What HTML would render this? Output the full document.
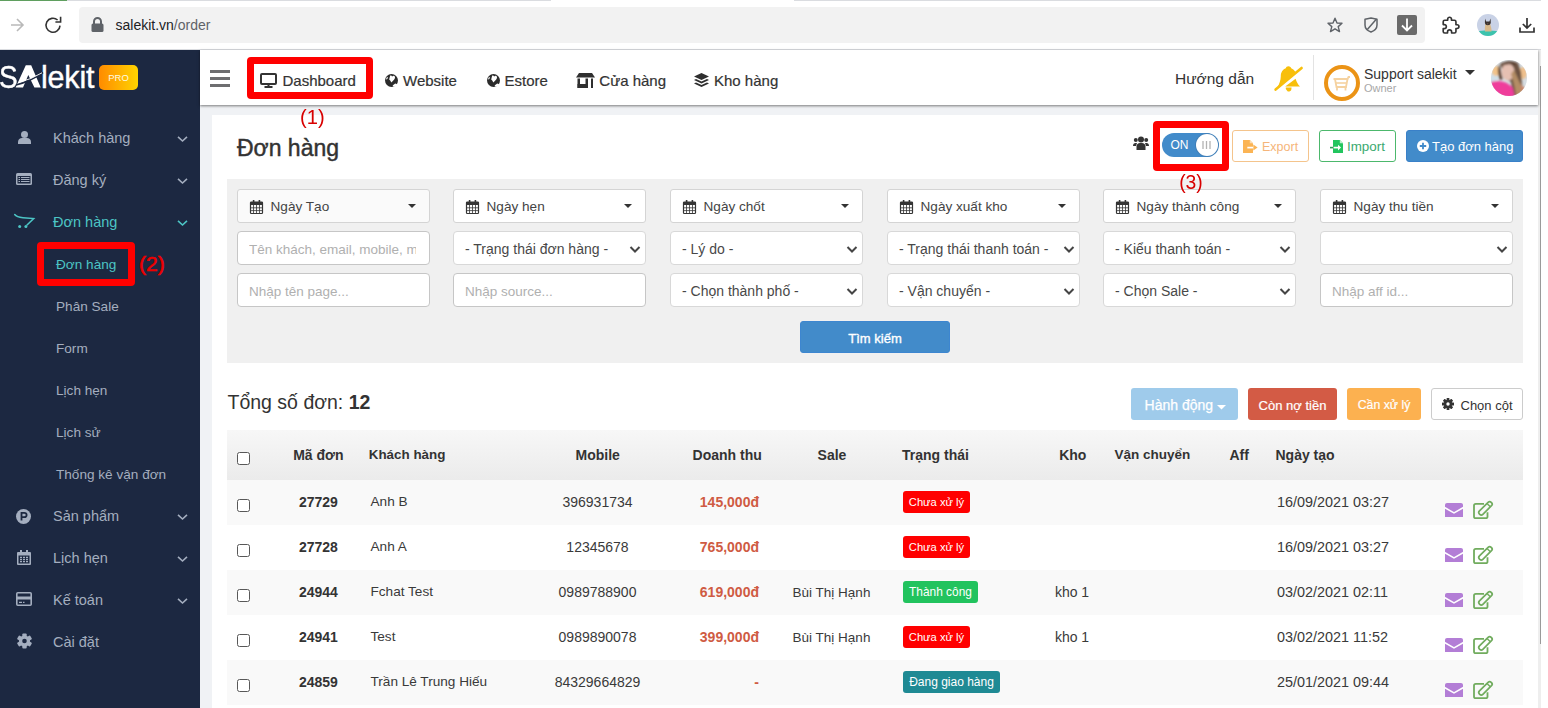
<!DOCTYPE html>
<html><head><meta charset="utf-8">
<style>
*{box-sizing:border-box;margin:0;padding:0}
html,body{width:1548px;height:708px;overflow:hidden;background:#fff;font-family:"Liberation Sans",sans-serif;color:#333}
.a{position:absolute;white-space:nowrap;line-height:1}
svg{position:absolute;display:block;overflow:visible}
</style></head><body>

<div style="position:absolute;left:0px;top:0px;width:1548px;height:50px;background:#fff"></div>
<div style="position:absolute;left:0px;top:0px;width:551px;height:1px;background:#dadce0"></div>
<div style="position:absolute;left:794px;top:0px;width:747px;height:1px;background:#dadce0"></div>
<div style="position:absolute;left:0px;top:0px;width:67px;height:1px;background:#5f9f5f"></div>
<div style="position:absolute;left:0px;top:49px;width:1541px;height:1px;background:#dadce0"></div>
<div style="position:absolute;left:79px;top:7px;width:1346px;height:36px;background:#f2f2f2;border-radius:4px"></div>
<svg style="left:10px;top:18px" width="14" height="14" viewBox="0 0 14 14"><path d="M1 7H13M7 1L13 7L7 13" fill="none" stroke="#b9b9b9" stroke-width="1.6"/></svg>
<svg style="left:45px;top:16px" width="17" height="17" viewBox="0 0 17 17"><path d="M15 9.6A7 7 0 1 1 12.6 4" fill="none" stroke="#333" stroke-width="1.6"/><path d="M15.6 0.8V6H10.4" fill="none" stroke="#333" stroke-width="1.6"/></svg>
<svg style="left:91px;top:17px" width="13" height="15" viewBox="0 0 13 15"><path d="M3 7V4.5A3.5 3.5 0 0 1 10 4.5V7" fill="none" stroke="#5f6368" stroke-width="2"/><rect x="0.5" y="6.5" width="12" height="8.5" rx="1.5" fill="#5f6368"/></svg>
<span class="a" style="left:115.50px;top:18.15px;font-size:14px;color:#202124;font-weight:normal;">salekit.vn<span style="color:#5f6368">/order</span></span>
<svg style="left:1327px;top:17px" width="16" height="16" viewBox="0 0 16 16"><path d="M8 1.2L10 6L15 6.3L11.2 9.6L12.5 14.6L8 11.8L3.5 14.6L4.8 9.6L1 6.3L6 6Z" fill="none" stroke="#5f6368" stroke-width="1.4" stroke-linejoin="round"/></svg>
<svg style="left:1364px;top:17px" width="14" height="16" viewBox="0 0 14 16"><path d="M7 1L1 2.2V8C1 11.5 3.6 13.8 7 15C10.4 13.8 13 11.5 13 8V2.2Z" fill="none" stroke="#5f6368" stroke-width="1.5" stroke-linejoin="round"/><path d="M3.3 12.5L12.5 2" stroke="#5f6368" stroke-width="1.5"/></svg>
<div style="position:absolute;left:1397px;top:15px;width:20px;height:20px;background:#6a6a6a;border-radius:2px"></div>
<svg style="left:1397px;top:15px" width="20" height="20" viewBox="0 0 20 20"><path d="M10 3.5V15.5M5 10.5L10 15.5L15 10.5" fill="none" stroke="#fff" stroke-width="1.8"/></svg>
<svg style="left:1443px;top:17px" width="16" height="16" viewBox="0 0 16 16"><g transform="translate(-1.3 -0.55) scale(0.75)"><path d="M20.5 11H19V7c0-1.1-.9-2-2-2h-4V3.5C13 2.12 11.88 1 10.5 1S8 2.12 8 3.5V5H4c-1.1 0-2 .9-2 2v3.8h1.5c1.49 0 2.7 1.21 2.7 2.7S4.99 16.2 3.5 16.2H2V20c0 1.1.9 2 2 2h3.8v-1.5c0-1.49 1.21-2.7 2.7-2.7s2.7 1.21 2.7 2.7V22H17c1.1 0 2-.9 2-2v-4h1.5c1.38 0 2.5-1.12 2.5-2.5S21.88 11 20.5 11z" fill="none" stroke="#333" stroke-width="2.2" stroke-linejoin="round"/></g></svg>
<svg style="left:1477px;top:14px" width="22" height="22" viewBox="0 0 22 22"><defs><clipPath id="catc"><circle cx="11" cy="11" r="11"/></clipPath></defs><g clip-path="url(#catc)"><rect width="22" height="22" fill="#c9d2e6"/><path d="M-1 17.5C5 16 15 16 23 17.5V23H-1Z" fill="#3cc3ad"/><path d="M8.5 9.5C8 12 7.5 15 8 17.5H14.5C14.8 15 13.8 12 13 9.5Z" fill="#d8b98c"/><path d="M8 4.5L9.2 7.5L12.4 7.5L13.6 4.5L13.8 8.8C13.6 10.5 12.2 11.3 10.8 11.3C9.4 11.3 8 10.5 7.9 8.8Z" fill="#3a3230"/><path d="M10.3 9.6H11.3L10.8 10.5Z" fill="#c9a07a"/></g></svg>
<svg style="left:1519px;top:17px" width="16" height="16" viewBox="0 0 16 16"><path d="M8 1V11M3.8 7L8 11L12.2 7M1 10.5V15H15V10.5" fill="none" stroke="#333" stroke-width="1.7"/></svg>
<div style="position:absolute;left:0px;top:50px;width:200px;height:658px;background:#1c2841"></div>
<div style="position:absolute;left:200px;top:50px;width:1339px;height:658px;background:#f0f2f5"></div>
<div style="position:absolute;left:212px;top:115px;width:1327px;height:593px;background:#fff"></div>
<div style="position:absolute;left:1539px;top:50px;width:9px;height:658px;background:#fff"></div>
<div style="position:absolute;left:1538px;top:50px;width:3px;height:658px;background:#eeeeee"></div>
<div style="position:absolute;left:1540px;top:66px;width:1px;height:578px;background:#9a9a9a"></div>
<div style="position:absolute;left:200px;top:50px;width:1338px;height:55px;background:#fff;box-shadow:0 1px 2.5px rgba(0,0,0,.5)"></div>
<div style="position:absolute;left:210px;top:70px;width:20px;height:3px;background:#6e6e70"></div>
<div style="position:absolute;left:210px;top:77px;width:20px;height:3px;background:#6e6e70"></div>
<div style="position:absolute;left:210px;top:84px;width:20px;height:3px;background:#6e6e70"></div>
<div style="position:absolute;left:247px;top:57px;width:126px;height:42px;border:7px solid #f00;border-radius:4px"></div>
<svg style="left:260px;top:73px" width="17" height="15" viewBox="0 0 17 15"><rect x="1" y="1" width="15" height="10" rx="1" fill="none" stroke="#333" stroke-width="2"/><path d="M8.5 11V13.5M4.5 14H12.5" stroke="#333" stroke-width="2"/></svg>
<span class="a" style="left:282.50px;top:73.30px;font-size:15px;color:#333;font-weight:normal;-webkit-text-stroke:0.2px #333">Dashboard</span>
<svg style="left:385px;top:74px" width="13" height="13" viewBox="0 0 13 13"><circle cx="6.5" cy="6.5" r="6.5" fill="#2b2b2b"/><path d="M5.2 1.6C6 1.2 6.8 1.8 7.2 2.6C7.8 1.8 8.8 1.6 9.6 2.2C10.4 3 10 4.4 9.2 5.4L6.4 8.4L5.2 6.6L4.2 5.6L4.6 3.8Z" fill="#fff"/><path d="M7.6 11.6L10.2 9.6L12.2 10.2C11.4 11.6 10 12.4 8.6 12.8Z" fill="#fff"/><path d="M1.6 3.6L3 3L2.4 5L1 5.6Z" fill="#fff"/></svg>
<span class="a" style="left:403.00px;top:73.30px;font-size:15px;color:#333;font-weight:normal;-webkit-text-stroke:0.2px #333">Website</span>
<svg style="left:487px;top:74px" width="13" height="13" viewBox="0 0 13 13"><circle cx="6.5" cy="6.5" r="6.5" fill="#2b2b2b"/><path d="M5.2 1.6C6 1.2 6.8 1.8 7.2 2.6C7.8 1.8 8.8 1.6 9.6 2.2C10.4 3 10 4.4 9.2 5.4L6.4 8.4L5.2 6.6L4.2 5.6L4.6 3.8Z" fill="#fff"/><path d="M7.6 11.6L10.2 9.6L12.2 10.2C11.4 11.6 10 12.4 8.6 12.8Z" fill="#fff"/><path d="M1.6 3.6L3 3L2.4 5L1 5.6Z" fill="#fff"/></svg>
<span class="a" style="left:504.50px;top:73.30px;font-size:15px;color:#333;font-weight:normal;-webkit-text-stroke:0.2px #333">Estore</span>
<svg style="left:576px;top:73px" width="19" height="15" viewBox="0 0 19 15"><path d="M3 0H16L19 4.5H0Z" fill="#2f2f2f"/><rect x="1.5" y="5.5" width="2.5" height="9.5" fill="#2f2f2f"/><rect x="1.5" y="11" width="10" height="4" fill="#2f2f2f"/><rect x="9.5" y="5.5" width="2.5" height="9.5" fill="#2f2f2f"/><rect x="15" y="5.5" width="2" height="9.5" fill="#2f2f2f"/></svg>
<span class="a" style="left:599.30px;top:73.30px;font-size:15px;color:#333;font-weight:normal;-webkit-text-stroke:0.2px #333">Cửa hàng</span>
<svg style="left:694px;top:73px" width="15" height="15" viewBox="0 0 15 15"><path d="M7.5 0L15 3.5L7.5 7L0 3.5Z" fill="#2f2f2f"/><path d="M0 7L2 6L7.5 8.6L13 6L15 7L7.5 10.5Z" fill="#2f2f2f"/><path d="M0 10.5L2 9.5L7.5 12.1L13 9.5L15 10.5L7.5 14Z" fill="#2f2f2f"/></svg>
<span class="a" style="left:714.00px;top:73.30px;font-size:15px;color:#333;font-weight:normal;-webkit-text-stroke:0.2px #333">Kho hàng</span>
<span class="a" style="left:1175.00px;top:71.38px;font-size:15.5px;color:#333;font-weight:normal;">Hướng dẫn</span>
<svg style="left:1270px;top:62px" width="40" height="34" viewBox="0 0 40 34"><path d="M18.5 4.3C20 4.3 21 5.3 21.2 6.3C23 7 24.5 8.4 25.6 10.2L7.2 25.6C9.3 22 10.8 18 10.8 14.2C10.8 10.2 13 7.3 15.8 6.3C16 5.2 17 4.3 18.5 4.3Z" fill="#f8bf0b"/><path d="M5.6 27.6L31.6 6" stroke="#f8bf0b" stroke-width="2.6" stroke-linecap="round"/><path d="M25.6 16.8C26.5 20 28 22.6 30 24.6H15.2Z" fill="#f8bf0b"/><path d="M15.8 25.5H21.6L21.2 28C20.6 29.3 19 29.8 17.5 29.3L15.8 27Z" fill="#f8bf0b"/></svg>
<div style="position:absolute;left:1313px;top:55px;width:1px;height:45px;background:#e3e3e3"></div>
<div style="position:absolute;left:1324px;top:65px;width:36px;height:36px;border:4.3px solid #eb9316;border-radius:50%;background:#fff"></div>
<svg style="left:1333px;top:76px" width="17" height="15" viewBox="0 0 17 15"><path d="M0.5 3H15.5M2 3L3.5 11H13L14.5 3L15.5 1H17" fill="none" stroke="#f5d2a0" stroke-width="1.8"/><path d="M2.8 7H14" stroke="#f5d2a0" stroke-width="1.6"/><path d="M4 11V14.5M12.5 11V14.5" stroke="#f5d2a0" stroke-width="1.8"/></svg>
<span class="a" style="left:1364.00px;top:66.95px;font-size:14px;color:#333;font-weight:normal;">Support salekit</span>
<span class="a" style="left:1364.00px;top:83.19px;font-size:11px;color:#a8a8a8;font-weight:normal;">Owner</span>
<svg style="left:1465px;top:70px" width="10" height="5" viewBox="0 0 10 5"><path d="M0 0H10L5 5Z" fill="#333"/></svg>
<svg style="left:1491px;top:60px" width="36" height="36" viewBox="0 0 36 36"><defs><clipPath id="avc"><circle cx="18" cy="18" r="18"/></clipPath><filter id="avb" x="-20%" y="-20%" width="140%" height="140%"><feGaussianBlur stdDeviation="0.9"/></filter></defs><g clip-path="url(#avc)"><rect x="-2" y="-2" width="40" height="40" fill="#d6dde2"/><g filter="url(#avb)"><ellipse cx="5" cy="11" rx="4" ry="5" fill="#f2c38a"/><ellipse cx="32" cy="13" rx="4" ry="6" fill="#efc08c"/><rect x="-2" y="16" width="8" height="8" fill="#cfe0ea"/><path d="M9 4C12 1 22 0 27 3L30 12L31 24L33 36H22L20 22L14 18Z" fill="#6d5242"/><path d="M8 5C10 8 10 14 12 19L9 20C7 14 6 8 8 5Z" fill="#5b4032"/><ellipse cx="17" cy="12" rx="6.5" ry="8.5" fill="#e6c0b2"/><path d="M14 3C16 1 22 1 25 4L23 6C20 4 17 4 14 5Z" fill="#5b4032"/><path d="M-2 24C2 20 8 21 13 22C17 23 20 26 22 28L24 38H-2Z" fill="#ef3c9b"/><path d="M23 10C26 16 28 22 31 26L34 36H25C24 28 22 20 20 14Z" fill="#b48d65"/><path d="M29 24C31 26 33 28 36 28V36H31Z" fill="#c9866a"/></g></g></svg>
<span class="a" style="left:-1.00px;top:62.18px;font-size:30.5px;color:#fff;font-weight:normal;transform:scaleX(0.92);transform-origin:0 0;-webkit-text-stroke:0.4px #fff">S</span>
<span class="a" style="left:41.00px;top:62.18px;font-size:30.5px;color:#fff;font-weight:normal;letter-spacing:-0.2px;-webkit-text-stroke:0.4px #fff">lekit</span>
<svg style="left:0px;top:60px" width="50" height="32" viewBox="0 0 50 32"><path d="M15.6 27.6L25.8 5.2H31.2L40.7 27.6H34.4L28.3 15L23 27.6Z" fill="#fff"/><path d="M16 25Q30 21.5 43 12.5" fill="none" stroke="#1c2841" stroke-width="1.6"/><path d="M19 22.3Q31 19.5 42 12.8" fill="none" stroke="#fff" stroke-width="0.9"/></svg>
<div style="position:absolute;left:99px;top:65px;width:39px;height:25px;border-radius:5px;background:linear-gradient(90deg,#ff8b00,#ffd400)"></div>
<span class="a" style="left:99.00px;top:72.96px;width:39px;text-align:center;font-size:9.5px;color:#fffbe0;font-weight:normal;">PRO</span>
<span class="a" style="left:53.00px;top:130.73px;font-size:14.5px;color:#a4aebf;font-weight:normal;">Khách hàng</span>
<svg style="left:177px;top:136px" width="11" height="6" viewBox="0 0 11 6"><path d="M1 0.8L5.5 5L10 0.8" fill="none" stroke="#a4aebf" stroke-width="1.6"/></svg>
<span class="a" style="left:53.00px;top:172.73px;font-size:14.5px;color:#a4aebf;font-weight:normal;">Đăng ký</span>
<svg style="left:177px;top:178px" width="11" height="6" viewBox="0 0 11 6"><path d="M1 0.8L5.5 5L10 0.8" fill="none" stroke="#a4aebf" stroke-width="1.6"/></svg>
<span class="a" style="left:53.00px;top:214.73px;font-size:14.5px;color:#4cc5c5;font-weight:normal;">Đơn hàng</span>
<svg style="left:177px;top:220px" width="11" height="6" viewBox="0 0 11 6"><path d="M1 0.8L5.5 5L10 0.8" fill="none" stroke="#4cc5c5" stroke-width="1.6"/></svg>
<span class="a" style="left:53.00px;top:508.73px;font-size:14.5px;color:#a4aebf;font-weight:normal;">Sản phẩm</span>
<svg style="left:177px;top:514px" width="11" height="6" viewBox="0 0 11 6"><path d="M1 0.8L5.5 5L10 0.8" fill="none" stroke="#a4aebf" stroke-width="1.6"/></svg>
<span class="a" style="left:53.00px;top:550.73px;font-size:14.5px;color:#a4aebf;font-weight:normal;">Lịch hẹn</span>
<svg style="left:177px;top:556px" width="11" height="6" viewBox="0 0 11 6"><path d="M1 0.8L5.5 5L10 0.8" fill="none" stroke="#a4aebf" stroke-width="1.6"/></svg>
<span class="a" style="left:53.00px;top:592.73px;font-size:14.5px;color:#a4aebf;font-weight:normal;">Kế toán</span>
<svg style="left:177px;top:598px" width="11" height="6" viewBox="0 0 11 6"><path d="M1 0.8L5.5 5L10 0.8" fill="none" stroke="#a4aebf" stroke-width="1.6"/></svg>
<span class="a" style="left:53.00px;top:634.73px;font-size:14.5px;color:#a4aebf;font-weight:normal;">Cài đặt</span>
<svg style="left:18px;top:131px" width="13" height="13" viewBox="0 0 13 13"><circle cx="6.5" cy="3.5" r="3.5" fill="#a4aebf"/><path d="M0 13V11C0 8.5 2 7 4 7H9C11 7 13 8.5 13 11V13Z" fill="#a4aebf"/></svg>
<svg style="left:16px;top:173px" width="16" height="12" viewBox="0 0 16 12"><rect x="0" y="0" width="16" height="12" rx="1.5" fill="#a4aebf"/><rect x="1.5" y="3" width="13" height="7.5" fill="#1c2841"/><path d="M2.5 4.5H4M2.5 6.5H4M2.5 8.5H4M5 4.5H13.5M5 6.5H13.5M5 8.5H13.5" stroke="#a4aebf" stroke-width="1"/></svg>
<svg style="left:14px;top:213px" width="22" height="16" viewBox="0 0 22 16"><path d="M0.7 1.5C2 3.3 4 4.3 9 4.7L19.7 5.6L13 12" fill="none" stroke="#4cc5c5" stroke-width="1.5" stroke-linecap="round"/><circle cx="5.7" cy="13.6" r="1.5" fill="#4cc5c5"/><circle cx="11.9" cy="13.6" r="1.5" fill="#4cc5c5"/></svg>
<svg style="left:16px;top:509px" width="15" height="15" viewBox="0 0 15 15"><circle cx="7.5" cy="7.5" r="7.5" fill="#a4aebf"/><path d="M5.5 11.5V3.8H8.2C9.8 3.8 10.6 4.7 10.6 6C10.6 7.3 9.8 8.2 8.2 8.2H5.5" fill="none" stroke="#1c2841" stroke-width="1.8"/></svg>
<svg style="left:17px;top:550px" width="14" height="15" viewBox="0 0 14 15"><rect x="0" y="2" width="14" height="13" rx="1" fill="#a4aebf"/><rect x="3" y="0" width="2" height="4" fill="#a4aebf"/><rect x="9" y="0" width="2" height="4" fill="#a4aebf"/><rect x="1.5" y="5.5" width="11" height="8" fill="#1c2841"/><path d="M3 7.3H5M6 7.3H8M9 7.3H11M3 9.5H5M6 9.5H8M9 9.5H11M3 11.7H5M6 11.7H8M9 11.7H11" stroke="#a4aebf" stroke-width="1.3"/></svg>
<svg style="left:16px;top:592px" width="16" height="14" viewBox="0 0 16 14"><rect x="0.8" y="0.8" width="14.4" height="12.4" rx="1" fill="none" stroke="#a4aebf" stroke-width="1.6"/><rect x="0.8" y="4.5" width="14.4" height="3" fill="#a4aebf"/><path d="M3 10.3H6M7 10.3H8.5" stroke="#a4aebf" stroke-width="1.2"/></svg>
<svg style="left:17px;top:633px" width="15" height="16" viewBox="0 0 15 16"><g transform="translate(7.5 8)"><circle r="5.6" fill="#a4aebf"/><rect x="-2.2" y="-7.6" width="4.4" height="4" rx="1" fill="#a4aebf" transform="rotate(0)"/><rect x="-2.2" y="-7.6" width="4.4" height="4" rx="1" fill="#a4aebf" transform="rotate(60)"/><rect x="-2.2" y="-7.6" width="4.4" height="4" rx="1" fill="#a4aebf" transform="rotate(120)"/><rect x="-2.2" y="-7.6" width="4.4" height="4" rx="1" fill="#a4aebf" transform="rotate(180)"/><rect x="-2.2" y="-7.6" width="4.4" height="4" rx="1" fill="#a4aebf" transform="rotate(240)"/><rect x="-2.2" y="-7.6" width="4.4" height="4" rx="1" fill="#a4aebf" transform="rotate(300)"/><circle r="2.3" fill="#1c2841"/></g></svg>
<span class="a" style="left:56.00px;top:258.09px;font-size:13.6px;color:#4cc5c5;font-weight:normal;">Đơn hàng</span>
<span class="a" style="left:56.00px;top:300.09px;font-size:13.6px;color:#a4aebf;font-weight:normal;">Phân Sale</span>
<span class="a" style="left:56.00px;top:342.09px;font-size:13.6px;color:#a4aebf;font-weight:normal;">Form</span>
<span class="a" style="left:56.00px;top:384.09px;font-size:13.6px;color:#a4aebf;font-weight:normal;">Lịch hẹn</span>
<span class="a" style="left:56.00px;top:426.09px;font-size:13.6px;color:#a4aebf;font-weight:normal;">Lịch sử</span>
<span class="a" style="left:56.00px;top:468.09px;font-size:13.6px;color:#a4aebf;font-weight:normal;">Thống kê vận đơn</span>
<div style="position:absolute;left:37px;top:242px;width:98px;height:44px;border:7px solid #f00;border-radius:4px"></div>
<span class="a" style="left:139.00px;top:253.22px;font-size:21px;color:#e00;font-weight:normal;-webkit-text-stroke:0.55px #e00">(2)</span>
<span class="a" style="left:237.00px;top:136.53px;font-size:23px;color:#333;font-weight:normal;-webkit-text-stroke:0.45px #333">Đơn hàng</span>
<svg style="left:1133px;top:136px" width="16" height="14" viewBox="0 0 16 14"><circle cx="8" cy="3.5" r="3" fill="#333"/><circle cx="2.8" cy="4" r="2" fill="#333"/><circle cx="13.2" cy="4" r="2" fill="#333"/><path d="M3.5 14V10.5C3.5 8.5 5 7 7 7H9C11 7 12.5 8.5 12.5 10.5V14Z" fill="#333"/><path d="M0 10C0 8 1 7 2.5 7H4L3 10Z M16 10C16 8 15 7 13.5 7H12L13 10Z" fill="#333"/></svg>
<div style="position:absolute;left:1153px;top:121px;width:76px;height:50px;border:7px solid #f00;border-radius:4px"></div>
<div style="position:absolute;left:1162px;top:133px;width:56px;height:24px;background:#428bca;border-radius:12px"></div>
<div style="position:absolute;left:1195.5px;top:134px;width:22px;height:22px;background:#fff;border-radius:50%;box-shadow:0 0 0 1px #3f7fb8"></div>
<span class="a" style="left:1170.50px;top:138.54px;font-size:12px;color:#fff;font-weight:normal;">ON</span>
<svg style="left:1202px;top:141px" width="9" height="8" viewBox="0 0 9 8"><path d="M1 0V8M4.5 0V8M8 0V8" stroke="#b3b3b3" stroke-width="1.3"/></svg>
<div style="position:absolute;left:1232px;top:130px;width:77px;height:32px;border:1px solid #f4c48c;border-radius:3px;background:#fff"></div>
<svg style="left:1243px;top:140px" width="15" height="13" viewBox="0 0 15 13"><path d="M0 0H6.8L10 3.2V13H0Z" fill="#fbb454"/><path d="M6.8 0V3.2H10Z" fill="#fddcb0"/><path d="M4.3 7.6H10.8" stroke="#fff" stroke-width="1.7"/><path d="M10.3 4.6L14.6 7.6L10.3 10.6Z" fill="#fbb454"/></svg>
<span class="a" style="left:1262.00px;top:140.62px;font-size:12.5px;color:#f5b57a;font-weight:normal;">Export</span>
<div style="position:absolute;left:1319px;top:130px;width:77px;height:32px;border:1px solid #4cb86c;border-radius:3px;background:#fff"></div>
<svg style="left:1330px;top:140px" width="14" height="13" viewBox="0 0 14 13"><path d="M3 0H9.8L13 3.2V13H3Z" fill="#22c55e"/><path d="M9.8 0V3.2H13Z" fill="#bff0cf"/><path d="M0 7.6H4" stroke="#2f9a55" stroke-width="1.6"/><path d="M3.5 7.6H8.5" stroke="#fff" stroke-width="1.7"/><path d="M8 4.8L11 7.6L8 10.4Z" fill="#fff"/></svg>
<span class="a" style="left:1347.00px;top:139.86px;font-size:13.4px;color:#3aaa70;font-weight:normal;">Import</span>
<div style="position:absolute;left:1406px;top:130px;width:117px;height:32px;background:#428bca;border:1px solid #3a80c8;border-radius:3px"></div>
<svg style="left:1417px;top:140px" width="12" height="12" viewBox="0 0 12 12"><circle cx="6" cy="6" r="6" fill="#fff"/><path d="M6 2.8V9.2M2.8 6H9.2" stroke="#428bca" stroke-width="1.8"/></svg>
<span class="a" style="left:1432.00px;top:140.00px;font-size:13px;color:#fff;font-weight:normal;">Tạo đơn hàng</span>
<div style="position:absolute;left:227px;top:179px;width:1296px;height:184px;background:#f0f0f0"></div>
<div style="position:absolute;left:237px;top:189px;width:192.5px;height:34px;background:#fafafa;border:1px solid #d4d4d4;border-radius:3px"></div>
<svg style="left:249.5px;top:199.5px" width="13" height="14" viewBox="0 0 13 14"><rect x="0.5" y="2" width="12" height="11.5" rx="0.8" fill="none" stroke="#353535" stroke-width="1.2"/><rect x="0.5" y="2" width="12" height="3" fill="#353535"/><rect x="2.8" y="0" width="1.6" height="3.5" fill="#353535"/><rect x="8.6" y="0" width="1.6" height="3.5" fill="#353535"/><path d="M0.5 7.8H12.5M0.5 10.6H12.5M3.5 5V13.5M6.5 5V13.5M9.5 5V13.5" stroke="#353535" stroke-width="0.8"/></svg>
<span class="a" style="left:270.50px;top:200.24px;font-size:13.6px;color:#444;font-weight:normal;">Ngày Tạo</span>
<svg style="left:407.5px;top:204px" width="8" height="4" viewBox="0 0 8 4"><path d="M0 0H8L4 4Z" fill="#333"/></svg>
<div style="position:absolute;left:453px;top:189px;width:192.5px;height:34px;background:#fff;border:1px solid #d4d4d4;border-radius:3px"></div>
<svg style="left:465.5px;top:199.5px" width="13" height="14" viewBox="0 0 13 14"><rect x="0.5" y="2" width="12" height="11.5" rx="0.8" fill="none" stroke="#353535" stroke-width="1.2"/><rect x="0.5" y="2" width="12" height="3" fill="#353535"/><rect x="2.8" y="0" width="1.6" height="3.5" fill="#353535"/><rect x="8.6" y="0" width="1.6" height="3.5" fill="#353535"/><path d="M0.5 7.8H12.5M0.5 10.6H12.5M3.5 5V13.5M6.5 5V13.5M9.5 5V13.5" stroke="#353535" stroke-width="0.8"/></svg>
<span class="a" style="left:486.50px;top:200.24px;font-size:13.6px;color:#444;font-weight:normal;">Ngày hẹn</span>
<svg style="left:623.5px;top:204px" width="8" height="4" viewBox="0 0 8 4"><path d="M0 0H8L4 4Z" fill="#333"/></svg>
<div style="position:absolute;left:670px;top:189px;width:192.5px;height:34px;background:#fff;border:1px solid #d4d4d4;border-radius:3px"></div>
<svg style="left:682.5px;top:199.5px" width="13" height="14" viewBox="0 0 13 14"><rect x="0.5" y="2" width="12" height="11.5" rx="0.8" fill="none" stroke="#353535" stroke-width="1.2"/><rect x="0.5" y="2" width="12" height="3" fill="#353535"/><rect x="2.8" y="0" width="1.6" height="3.5" fill="#353535"/><rect x="8.6" y="0" width="1.6" height="3.5" fill="#353535"/><path d="M0.5 7.8H12.5M0.5 10.6H12.5M3.5 5V13.5M6.5 5V13.5M9.5 5V13.5" stroke="#353535" stroke-width="0.8"/></svg>
<span class="a" style="left:703.50px;top:200.24px;font-size:13.6px;color:#444;font-weight:normal;">Ngày chốt</span>
<svg style="left:840.5px;top:204px" width="8" height="4" viewBox="0 0 8 4"><path d="M0 0H8L4 4Z" fill="#333"/></svg>
<div style="position:absolute;left:887px;top:189px;width:192.5px;height:34px;background:#fff;border:1px solid #d4d4d4;border-radius:3px"></div>
<svg style="left:899.5px;top:199.5px" width="13" height="14" viewBox="0 0 13 14"><rect x="0.5" y="2" width="12" height="11.5" rx="0.8" fill="none" stroke="#353535" stroke-width="1.2"/><rect x="0.5" y="2" width="12" height="3" fill="#353535"/><rect x="2.8" y="0" width="1.6" height="3.5" fill="#353535"/><rect x="8.6" y="0" width="1.6" height="3.5" fill="#353535"/><path d="M0.5 7.8H12.5M0.5 10.6H12.5M3.5 5V13.5M6.5 5V13.5M9.5 5V13.5" stroke="#353535" stroke-width="0.8"/></svg>
<span class="a" style="left:920.50px;top:200.24px;font-size:13.6px;color:#444;font-weight:normal;">Ngày xuất kho</span>
<svg style="left:1057.5px;top:204px" width="8" height="4" viewBox="0 0 8 4"><path d="M0 0H8L4 4Z" fill="#333"/></svg>
<div style="position:absolute;left:1103px;top:189px;width:192.5px;height:34px;background:#fff;border:1px solid #d4d4d4;border-radius:3px"></div>
<svg style="left:1115.5px;top:199.5px" width="13" height="14" viewBox="0 0 13 14"><rect x="0.5" y="2" width="12" height="11.5" rx="0.8" fill="none" stroke="#353535" stroke-width="1.2"/><rect x="0.5" y="2" width="12" height="3" fill="#353535"/><rect x="2.8" y="0" width="1.6" height="3.5" fill="#353535"/><rect x="8.6" y="0" width="1.6" height="3.5" fill="#353535"/><path d="M0.5 7.8H12.5M0.5 10.6H12.5M3.5 5V13.5M6.5 5V13.5M9.5 5V13.5" stroke="#353535" stroke-width="0.8"/></svg>
<span class="a" style="left:1136.50px;top:200.24px;font-size:13.6px;color:#444;font-weight:normal;">Ngày thành công</span>
<svg style="left:1273.5px;top:204px" width="8" height="4" viewBox="0 0 8 4"><path d="M0 0H8L4 4Z" fill="#333"/></svg>
<div style="position:absolute;left:1320px;top:189px;width:192.5px;height:34px;background:#fff;border:1px solid #d4d4d4;border-radius:3px"></div>
<svg style="left:1332.5px;top:199.5px" width="13" height="14" viewBox="0 0 13 14"><rect x="0.5" y="2" width="12" height="11.5" rx="0.8" fill="none" stroke="#353535" stroke-width="1.2"/><rect x="0.5" y="2" width="12" height="3" fill="#353535"/><rect x="2.8" y="0" width="1.6" height="3.5" fill="#353535"/><rect x="8.6" y="0" width="1.6" height="3.5" fill="#353535"/><path d="M0.5 7.8H12.5M0.5 10.6H12.5M3.5 5V13.5M6.5 5V13.5M9.5 5V13.5" stroke="#353535" stroke-width="0.8"/></svg>
<span class="a" style="left:1353.50px;top:200.24px;font-size:13.6px;color:#444;font-weight:normal;">Ngày thu tiền</span>
<svg style="left:1490.5px;top:204px" width="8" height="4" viewBox="0 0 8 4"><path d="M0 0H8L4 4Z" fill="#333"/></svg>
<div style="position:absolute;left:237px;top:231px;width:192.5px;height:34px;border:1px solid #c6c6c6;border-radius:4px;background:#fff;overflow:hidden"></div>
<div style="position:absolute;left:249px;top:231px;width:167px;height:34px;overflow:hidden"><span class="a" style="left:0;top:11.57px;font-size:13.5px;color:#b0b0b0">Tên khách, email, mobile, mã đơn</span></div>
<div style="position:absolute;left:237px;top:273px;width:192.5px;height:34px;border:1px solid #c6c6c6;border-radius:4px;background:#fff;overflow:hidden"></div>
<div style="position:absolute;left:249px;top:273px;width:167px;height:34px;overflow:hidden"><span class="a" style="left:0;top:11.57px;font-size:13.5px;color:#b0b0b0">Nhập tên page...</span></div>
<div style="position:absolute;left:453px;top:231px;width:192.5px;height:34px;background:#fff;border:1px solid #d8d8d8;border-radius:4px"></div>
<span class="a" style="left:465.00px;top:242.15px;font-size:14px;color:#484848;font-weight:normal;">- Trạng thái đơn hàng -</span>
<svg style="left:630.3px;top:245.5px" width="10" height="7" viewBox="0 0 10 7"><path d="M0.5 1L5 5.5L9.5 1" fill="none" stroke="#454545" stroke-width="2"/></svg>
<div style="position:absolute;left:453px;top:273px;width:192.5px;height:34px;border:1px solid #c6c6c6;border-radius:4px;background:#fff;overflow:hidden"></div>
<div style="position:absolute;left:465px;top:273px;width:167px;height:34px;overflow:hidden"><span class="a" style="left:0;top:11.57px;font-size:13.5px;color:#b0b0b0">Nhập source...</span></div>
<div style="position:absolute;left:670px;top:231px;width:192.5px;height:34px;background:#fff;border:1px solid #d8d8d8;border-radius:4px"></div>
<span class="a" style="left:682.00px;top:242.15px;font-size:14px;color:#484848;font-weight:normal;">- Lý do -</span>
<svg style="left:847.3px;top:245.5px" width="10" height="7" viewBox="0 0 10 7"><path d="M0.5 1L5 5.5L9.5 1" fill="none" stroke="#454545" stroke-width="2"/></svg>
<div style="position:absolute;left:670px;top:273px;width:192.5px;height:34px;background:#fff;border:1px solid #d8d8d8;border-radius:4px"></div>
<span class="a" style="left:682.00px;top:284.15px;font-size:14px;color:#484848;font-weight:normal;">- Chọn thành phố -</span>
<svg style="left:847.3px;top:287.5px" width="10" height="7" viewBox="0 0 10 7"><path d="M0.5 1L5 5.5L9.5 1" fill="none" stroke="#454545" stroke-width="2"/></svg>
<div style="position:absolute;left:887px;top:231px;width:192.5px;height:34px;background:#fff;border:1px solid #d8d8d8;border-radius:4px"></div>
<span class="a" style="left:899.00px;top:242.15px;font-size:14px;color:#484848;font-weight:normal;">- Trạng thái thanh toán -</span>
<svg style="left:1064.3px;top:245.5px" width="10" height="7" viewBox="0 0 10 7"><path d="M0.5 1L5 5.5L9.5 1" fill="none" stroke="#454545" stroke-width="2"/></svg>
<div style="position:absolute;left:887px;top:273px;width:192.5px;height:34px;background:#fff;border:1px solid #d8d8d8;border-radius:4px"></div>
<span class="a" style="left:899.00px;top:284.15px;font-size:14px;color:#484848;font-weight:normal;">- Vận chuyển -</span>
<svg style="left:1064.3px;top:287.5px" width="10" height="7" viewBox="0 0 10 7"><path d="M0.5 1L5 5.5L9.5 1" fill="none" stroke="#454545" stroke-width="2"/></svg>
<div style="position:absolute;left:1103px;top:231px;width:192.5px;height:34px;background:#fff;border:1px solid #d8d8d8;border-radius:4px"></div>
<span class="a" style="left:1115.00px;top:242.15px;font-size:14px;color:#484848;font-weight:normal;">- Kiểu thanh toán -</span>
<svg style="left:1280.3px;top:245.5px" width="10" height="7" viewBox="0 0 10 7"><path d="M0.5 1L5 5.5L9.5 1" fill="none" stroke="#454545" stroke-width="2"/></svg>
<div style="position:absolute;left:1103px;top:273px;width:192.5px;height:34px;background:#fff;border:1px solid #d8d8d8;border-radius:4px"></div>
<span class="a" style="left:1115.00px;top:284.15px;font-size:14px;color:#484848;font-weight:normal;">- Chọn Sale -</span>
<svg style="left:1280.3px;top:287.5px" width="10" height="7" viewBox="0 0 10 7"><path d="M0.5 1L5 5.5L9.5 1" fill="none" stroke="#454545" stroke-width="2"/></svg>
<div style="position:absolute;left:1320px;top:231px;width:192.5px;height:34px;background:#fff;border:1px solid #d8d8d8;border-radius:4px"></div>
<span class="a" style="left:1332.00px;top:242.15px;font-size:14px;color:#484848;font-weight:normal;"></span>
<svg style="left:1497.3px;top:245.5px" width="10" height="7" viewBox="0 0 10 7"><path d="M0.5 1L5 5.5L9.5 1" fill="none" stroke="#454545" stroke-width="2"/></svg>
<div style="position:absolute;left:1320px;top:273px;width:192.5px;height:34px;border:1px solid #c6c6c6;border-radius:4px;background:#fff;overflow:hidden"></div>
<div style="position:absolute;left:1332px;top:273px;width:167px;height:34px;overflow:hidden"><span class="a" style="left:0;top:11.57px;font-size:13.5px;color:#b0b0b0">Nhập aff id...</span></div>
<div style="position:absolute;left:800px;top:321px;width:150px;height:32px;background:#428bca;border:1px solid #3d86d0;border-radius:3px"></div>
<span class="a" style="left:800.00px;top:331.50px;width:150px;text-align:center;font-size:13px;color:#fff;font-weight:normal;-webkit-text-stroke:0.35px #fff">Tìm kiếm</span>
<span class="a" style="left:227.50px;top:392.99px;font-size:19.5px;color:#333;font-weight:normal;">Tổng số đơn: <b>12</b></span>
<div style="position:absolute;left:1131px;top:388px;width:107px;height:32px;background:#9fcbeb;border-radius:3px"></div>
<span class="a" style="left:1144.60px;top:397.85px;font-size:14px;color:#fff;font-weight:normal;-webkit-text-stroke:0.25px #fff">Hành động</span>
<svg style="left:1217px;top:405px" width="9" height="5" viewBox="0 0 9 5"><path d="M0 0H9L4.5 4.5Z" fill="#fff"/></svg>
<div style="position:absolute;left:1248px;top:388px;width:89px;height:32px;background:#d35b45;border-radius:3px"></div>
<span class="a" style="left:1248.00px;top:398.50px;width:89px;text-align:center;font-size:13px;color:#fff;font-weight:normal;-webkit-text-stroke:0.2px #fff">Còn nợ tiền</span>
<div style="position:absolute;left:1347px;top:388px;width:74px;height:32px;background:#fcb150;border-radius:3px"></div>
<span class="a" style="left:1347.00px;top:399.09px;width:74px;text-align:center;font-size:12.3px;color:#fff;font-weight:normal;-webkit-text-stroke:0.2px #fff">Cần xử lý</span>
<div style="position:absolute;left:1431px;top:388px;width:92px;height:32px;background:#fff;border:1px solid #ccc;border-radius:3px"></div>
<svg style="left:1442px;top:398px" width="12" height="12" viewBox="0 0 12 12"><g transform="translate(6 6)"><circle r="4.2" fill="#333"/><rect x="-1.4" y="-6" width="2.8" height="3" rx="0.5" fill="#333" transform="rotate(0)"/><rect x="-1.4" y="-6" width="2.8" height="3" rx="0.5" fill="#333" transform="rotate(45)"/><rect x="-1.4" y="-6" width="2.8" height="3" rx="0.5" fill="#333" transform="rotate(90)"/><rect x="-1.4" y="-6" width="2.8" height="3" rx="0.5" fill="#333" transform="rotate(135)"/><rect x="-1.4" y="-6" width="2.8" height="3" rx="0.5" fill="#333" transform="rotate(180)"/><rect x="-1.4" y="-6" width="2.8" height="3" rx="0.5" fill="#333" transform="rotate(225)"/><rect x="-1.4" y="-6" width="2.8" height="3" rx="0.5" fill="#333" transform="rotate(270)"/><rect x="-1.4" y="-6" width="2.8" height="3" rx="0.5" fill="#333" transform="rotate(315)"/><circle r="1.7" fill="#fff"/></g></svg>
<span class="a" style="left:1460.50px;top:398.50px;font-size:13px;color:#333;font-weight:normal;">Chọn cột</span>
<div style="position:absolute;left:227px;top:430px;width:1296px;height:50px;background:linear-gradient(#f7f7f7,#ebebeb)"></div>
<div style="position:absolute;left:237px;top:452px;width:13px;height:13px;background:#fff;border:1.3px solid #585858;border-radius:2.5px"></div>
<span class="a" style="left:258.40px;top:447.75px;width:120px;text-align:center;font-size:14px;color:#333;font-weight:bold;">Mã đơn</span>
<span class="a" style="left:368.75px;top:448.26px;font-size:13.4px;color:#333;font-weight:bold;">Khách hàng</span>
<span class="a" style="left:537.75px;top:447.75px;width:120px;text-align:center;font-size:14px;color:#333;font-weight:bold;">Mobile</span>
<span class="a" style="left:641.75px;top:447.75px;width:120px;text-align:right;font-size:14px;color:#333;font-weight:bold;">Doanh thu</span>
<span class="a" style="left:772.00px;top:447.75px;width:120px;text-align:center;font-size:14px;color:#333;font-weight:bold;">Sale</span>
<span class="a" style="left:902.00px;top:447.75px;font-size:14px;color:#333;font-weight:bold;">Trạng thái</span>
<span class="a" style="left:1012.75px;top:447.75px;width:120px;text-align:center;font-size:14px;color:#333;font-weight:bold;">Kho</span>
<span class="a" style="left:1114.50px;top:448.17px;font-size:13.5px;color:#333;font-weight:bold;">Vận chuyển</span>
<span class="a" style="left:1229.50px;top:447.75px;font-size:14px;color:#333;font-weight:bold;">Aff</span>
<span class="a" style="left:1275.50px;top:447.75px;font-size:14px;color:#333;font-weight:bold;">Ngày tạo</span>
<div style="position:absolute;left:227px;top:480px;width:1296px;height:45px;background:#f9f9f9"></div>
<div style="position:absolute;left:237px;top:499px;width:13px;height:13px;background:#fff;border:1.3px solid #585858;border-radius:2.5px"></div>
<span class="a" style="left:258.40px;top:495.15px;width:120px;text-align:center;font-size:14px;color:#333;font-weight:bold;">27729</span>
<span class="a" style="left:370.50px;top:495.49px;font-size:13.6px;color:#3a3a3a;font-weight:normal;">Anh B</span>
<span class="a" style="left:527.50px;top:495.15px;width:140px;text-align:center;font-size:14px;color:#3a3a3a;font-weight:normal;">396931734</span>
<span class="a" style="left:639.00px;top:495.15px;width:120px;text-align:right;font-size:14px;color:#cf5b43;font-weight:bold;">145,000đ</span>
<div class="a" style="left:903px;top:491px;width:67px;height:22px;text-align:center;background:#f00;border-radius:3px;color:#fff;font-size:11.2px;line-height:22px">Chưa xử lý</div>
<span class="a" style="left:1277.00px;top:494.81px;font-size:14.4px;color:#3a3a3a;font-weight:normal;">16/09/2021 03:27</span>
<svg style="left:1445px;top:503px" width="18" height="14" viewBox="0 0 18 14"><path d="M0 2C0 0.9 0.9 0 2 0H16C17.1 0 18 0.9 18 2V14H0Z" fill="#b37ed6"/><path d="M-0.5 4.5L9 9.8L18.5 4.5" fill="none" stroke="#fff" stroke-width="1.5"/></svg>
<svg style="left:1473px;top:501px" width="20" height="18" viewBox="0 0 20 18"><path d="M11 2.8H2.8C1.7 2.8 1 3.5 1 4.6V15.4C1 16.5 1.7 17.2 2.8 17.2H12.7C13.8 17.2 14.5 16.5 14.5 15.4V11.2" fill="none" stroke="#71ac5e" stroke-width="1.8"/><g transform="translate(12.4 7.4) rotate(-45)"><rect x="-8.2" y="-2.4" width="16.6" height="4.8" rx="2.2" fill="none" stroke="#71ac5e" stroke-width="1.7"/><path d="M4.6 -2.4V2.4" stroke="#71ac5e" stroke-width="1.4"/></g></svg>
<div style="position:absolute;left:227px;top:525px;width:1296px;height:45px;background:#fff"></div>
<div style="position:absolute;left:237px;top:544px;width:13px;height:13px;background:#fff;border:1.3px solid #585858;border-radius:2.5px"></div>
<span class="a" style="left:258.40px;top:540.15px;width:120px;text-align:center;font-size:14px;color:#333;font-weight:bold;">27728</span>
<span class="a" style="left:370.50px;top:540.49px;font-size:13.6px;color:#3a3a3a;font-weight:normal;">Anh A</span>
<span class="a" style="left:527.50px;top:540.15px;width:140px;text-align:center;font-size:14px;color:#3a3a3a;font-weight:normal;">12345678</span>
<span class="a" style="left:639.00px;top:540.15px;width:120px;text-align:right;font-size:14px;color:#cf5b43;font-weight:bold;">765,000đ</span>
<div class="a" style="left:903px;top:536px;width:67px;height:22px;text-align:center;background:#f00;border-radius:3px;color:#fff;font-size:11.2px;line-height:22px">Chưa xử lý</div>
<span class="a" style="left:1277.00px;top:539.81px;font-size:14.4px;color:#3a3a3a;font-weight:normal;">16/09/2021 03:27</span>
<svg style="left:1445px;top:548px" width="18" height="14" viewBox="0 0 18 14"><path d="M0 2C0 0.9 0.9 0 2 0H16C17.1 0 18 0.9 18 2V14H0Z" fill="#b37ed6"/><path d="M-0.5 4.5L9 9.8L18.5 4.5" fill="none" stroke="#fff" stroke-width="1.5"/></svg>
<svg style="left:1473px;top:546px" width="20" height="18" viewBox="0 0 20 18"><path d="M11 2.8H2.8C1.7 2.8 1 3.5 1 4.6V15.4C1 16.5 1.7 17.2 2.8 17.2H12.7C13.8 17.2 14.5 16.5 14.5 15.4V11.2" fill="none" stroke="#71ac5e" stroke-width="1.8"/><g transform="translate(12.4 7.4) rotate(-45)"><rect x="-8.2" y="-2.4" width="16.6" height="4.8" rx="2.2" fill="none" stroke="#71ac5e" stroke-width="1.7"/><path d="M4.6 -2.4V2.4" stroke="#71ac5e" stroke-width="1.4"/></g></svg>
<div style="position:absolute;left:227px;top:570px;width:1296px;height:45px;background:#f9f9f9"></div>
<div style="position:absolute;left:237px;top:589px;width:13px;height:13px;background:#fff;border:1.3px solid #585858;border-radius:2.5px"></div>
<span class="a" style="left:258.40px;top:585.15px;width:120px;text-align:center;font-size:14px;color:#333;font-weight:bold;">24944</span>
<span class="a" style="left:370.50px;top:585.49px;font-size:13.6px;color:#3a3a3a;font-weight:normal;">Fchat Test</span>
<span class="a" style="left:527.50px;top:585.15px;width:140px;text-align:center;font-size:14px;color:#3a3a3a;font-weight:normal;">0989788900</span>
<span class="a" style="left:639.00px;top:585.15px;width:120px;text-align:right;font-size:14px;color:#cf5b43;font-weight:bold;">619,000đ</span>
<span class="a" style="left:761.50px;top:585.57px;width:140px;text-align:center;font-size:13.5px;color:#3a3a3a;font-weight:normal;">Bùi Thị Hạnh</span>
<div class="a" style="left:903px;top:581px;width:75px;height:22px;text-align:center;background:#22c35e;border-radius:3px;color:#fff;font-size:11.9px;line-height:22px">Thành công</div>
<span class="a" style="left:1012.00px;top:585.15px;width:120px;text-align:center;font-size:14px;color:#3a3a3a;font-weight:normal;">kho 1</span>
<span class="a" style="left:1277.00px;top:584.81px;font-size:14.4px;color:#3a3a3a;font-weight:normal;">03/02/2021 02:11</span>
<svg style="left:1445px;top:593px" width="18" height="14" viewBox="0 0 18 14"><path d="M0 2C0 0.9 0.9 0 2 0H16C17.1 0 18 0.9 18 2V14H0Z" fill="#b37ed6"/><path d="M-0.5 4.5L9 9.8L18.5 4.5" fill="none" stroke="#fff" stroke-width="1.5"/></svg>
<svg style="left:1473px;top:591px" width="20" height="18" viewBox="0 0 20 18"><path d="M11 2.8H2.8C1.7 2.8 1 3.5 1 4.6V15.4C1 16.5 1.7 17.2 2.8 17.2H12.7C13.8 17.2 14.5 16.5 14.5 15.4V11.2" fill="none" stroke="#71ac5e" stroke-width="1.8"/><g transform="translate(12.4 7.4) rotate(-45)"><rect x="-8.2" y="-2.4" width="16.6" height="4.8" rx="2.2" fill="none" stroke="#71ac5e" stroke-width="1.7"/><path d="M4.6 -2.4V2.4" stroke="#71ac5e" stroke-width="1.4"/></g></svg>
<div style="position:absolute;left:227px;top:615px;width:1296px;height:45px;background:#fff"></div>
<div style="position:absolute;left:237px;top:634px;width:13px;height:13px;background:#fff;border:1.3px solid #585858;border-radius:2.5px"></div>
<span class="a" style="left:258.40px;top:630.15px;width:120px;text-align:center;font-size:14px;color:#333;font-weight:bold;">24941</span>
<span class="a" style="left:370.50px;top:630.49px;font-size:13.6px;color:#3a3a3a;font-weight:normal;">Test</span>
<span class="a" style="left:527.50px;top:630.15px;width:140px;text-align:center;font-size:14px;color:#3a3a3a;font-weight:normal;">0989890078</span>
<span class="a" style="left:639.00px;top:630.15px;width:120px;text-align:right;font-size:14px;color:#cf5b43;font-weight:bold;">399,000đ</span>
<span class="a" style="left:761.50px;top:630.57px;width:140px;text-align:center;font-size:13.5px;color:#3a3a3a;font-weight:normal;">Bùi Thị Hạnh</span>
<div class="a" style="left:903px;top:626px;width:67px;height:22px;text-align:center;background:#f00;border-radius:3px;color:#fff;font-size:11.2px;line-height:22px">Chưa xử lý</div>
<span class="a" style="left:1012.00px;top:630.15px;width:120px;text-align:center;font-size:14px;color:#3a3a3a;font-weight:normal;">kho 1</span>
<span class="a" style="left:1277.00px;top:629.81px;font-size:14.4px;color:#3a3a3a;font-weight:normal;">03/02/2021 11:52</span>
<svg style="left:1445px;top:638px" width="18" height="14" viewBox="0 0 18 14"><path d="M0 2C0 0.9 0.9 0 2 0H16C17.1 0 18 0.9 18 2V14H0Z" fill="#b37ed6"/><path d="M-0.5 4.5L9 9.8L18.5 4.5" fill="none" stroke="#fff" stroke-width="1.5"/></svg>
<svg style="left:1473px;top:636px" width="20" height="18" viewBox="0 0 20 18"><path d="M11 2.8H2.8C1.7 2.8 1 3.5 1 4.6V15.4C1 16.5 1.7 17.2 2.8 17.2H12.7C13.8 17.2 14.5 16.5 14.5 15.4V11.2" fill="none" stroke="#71ac5e" stroke-width="1.8"/><g transform="translate(12.4 7.4) rotate(-45)"><rect x="-8.2" y="-2.4" width="16.6" height="4.8" rx="2.2" fill="none" stroke="#71ac5e" stroke-width="1.7"/><path d="M4.6 -2.4V2.4" stroke="#71ac5e" stroke-width="1.4"/></g></svg>
<div style="position:absolute;left:227px;top:660px;width:1296px;height:45px;background:#f9f9f9"></div>
<div style="position:absolute;left:237px;top:679px;width:13px;height:13px;background:#fff;border:1.3px solid #585858;border-radius:2.5px"></div>
<span class="a" style="left:258.40px;top:675.15px;width:120px;text-align:center;font-size:14px;color:#333;font-weight:bold;">24859</span>
<span class="a" style="left:370.50px;top:675.49px;font-size:13.6px;color:#3a3a3a;font-weight:normal;">Trần Lê Trung Hiếu</span>
<span class="a" style="left:527.50px;top:675.15px;width:140px;text-align:center;font-size:14px;color:#3a3a3a;font-weight:normal;">84329664829</span>
<span class="a" style="left:639.00px;top:675.15px;width:120px;text-align:right;font-size:14px;color:#cf5b43;font-weight:bold;">-</span>
<div class="a" style="left:903px;top:671px;width:97px;height:22px;text-align:center;background:#1f8a94;border-radius:3px;color:#fff;font-size:12px;line-height:22px">Đang giao hàng</div>
<span class="a" style="left:1277.00px;top:674.81px;font-size:14.4px;color:#3a3a3a;font-weight:normal;">25/01/2021 09:44</span>
<svg style="left:1445px;top:683px" width="18" height="14" viewBox="0 0 18 14"><path d="M0 2C0 0.9 0.9 0 2 0H16C17.1 0 18 0.9 18 2V14H0Z" fill="#b37ed6"/><path d="M-0.5 4.5L9 9.8L18.5 4.5" fill="none" stroke="#fff" stroke-width="1.5"/></svg>
<svg style="left:1473px;top:681px" width="20" height="18" viewBox="0 0 20 18"><path d="M11 2.8H2.8C1.7 2.8 1 3.5 1 4.6V15.4C1 16.5 1.7 17.2 2.8 17.2H12.7C13.8 17.2 14.5 16.5 14.5 15.4V11.2" fill="none" stroke="#71ac5e" stroke-width="1.8"/><g transform="translate(12.4 7.4) rotate(-45)"><rect x="-8.2" y="-2.4" width="16.6" height="4.8" rx="2.2" fill="none" stroke="#71ac5e" stroke-width="1.7"/><path d="M4.6 -2.4V2.4" stroke="#71ac5e" stroke-width="1.4"/></g></svg>
<span class="a" style="left:300.00px;top:106.42px;font-size:21px;color:#d80000;font-weight:normal;transform:scaleX(0.96);transform-origin:0 0">(1)</span>
<span class="a" style="left:1171.00px;top:170.72px;width:40px;text-align:center;font-size:21px;color:#d80000;font-weight:normal;transform:scaleX(0.92)">(3)</span>
</body></html>
